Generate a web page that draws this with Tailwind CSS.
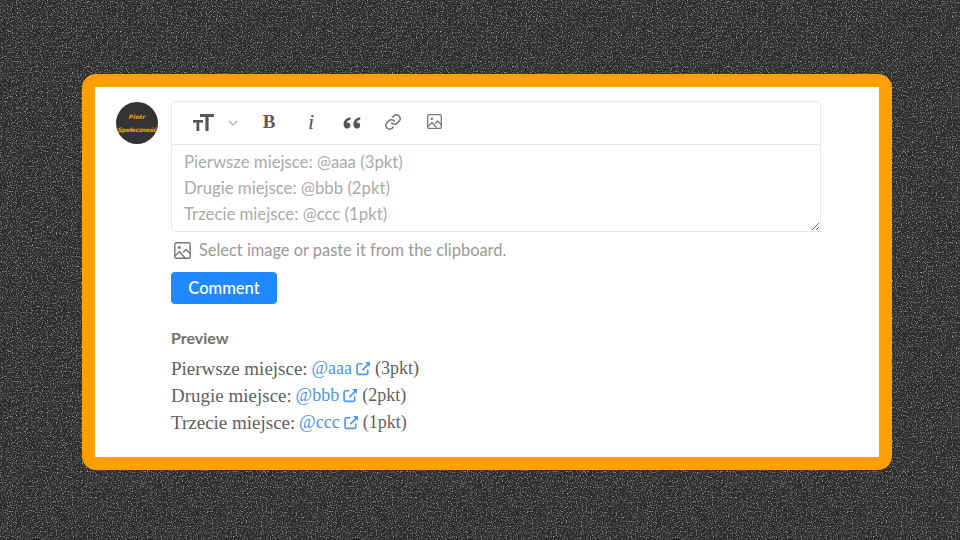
<!DOCTYPE html>
<html lang="en">
<head>
  <meta charset="UTF-8" />
  <title>Comment preview</title>
  <script src="https://cdn.jsdelivr.net/npm/@tailwindcss/browser@4"></script>
</head>
<body class="relative w-[960px] h-[540px] overflow-hidden bg-[#303030] font-['Lato','Noto_Sans',sans-serif]">
  <!-- grainy backdrop -->
  <svg class="absolute inset-0" width="960" height="540" aria-hidden="true">
    <filter id="specks" x="0" y="0" width="100%" height="100%">
      <feTurbulence type="fractalNoise" baseFrequency="0.8" numOctaves="2" seed="21" />
      <feColorMatrix type="matrix" values="0 0 0 0 0.42  0 0 0 0 0.42  0 0 0 0 0.42  0 2.600 0 0 -1.300" />
      <feGaussianBlur stdDeviation="0.35" />
    </filter>
    <rect width="960" height="540" fill="#2c2c2c" />
    <rect width="960" height="540" filter="url(#specks)" />
  </svg>

  <div class="relative pl-[82px] pt-[74px]">
    <main class="w-[810px] h-[396px] bg-white border-[13px] border-[#ffa000] rounded-[14px] pl-[21px] pt-[14px] flex gap-[13px]">
      <!-- avatar -->
      <div class="w-[42px] h-[42px] mt-[1px] rounded-full bg-[#333333] flex flex-col items-center justify-center shrink-0 text-[#f0a010] font-['DejaVu_Sans',sans-serif] leading-[13px] italic font-bold">
        <span class="text-[6px]">Piotr</span>
        <span class="text-[6px] tracking-[-0.3px]">Społeczność</span>
      </div>

      <div class="w-[650px]">
        <!-- editor -->
        <div class="w-[650px] h-[131px] border border-[#e8e8e8] rounded-[4px] flex flex-col">
          <div class="h-[43px] border-b border-[#e8e8e8] flex items-center shrink-0 text-[#555555]">
            <svg class="ml-[21px] -mt-[1px]" width="21" height="18" viewBox="0 0 21 18" fill="#555555">
              <rect x="7" y="0" width="14" height="3" /><rect x="12.400" y="0" width="3.200" height="17" />
              <rect x="0" y="6" width="10" height="2.600" /><rect x="3.500" y="6" width="2.800" height="11" />
            </svg>
            <svg class="ml-[14px]" width="10" height="6" viewBox="0 0 10 6" fill="none" stroke="#aaaaaa" stroke-width="1.200"><path d="M1 1l4 4 4-4" /></svg>
            <span class="ml-[24px] w-[14px] text-center text-[19px] font-bold font-['Liberation_Serif',serif] text-[#5a5a5a] -mt-[1px]">B</span>
            <span class="ml-[29px] w-[12px] text-center text-[22px] italic font-['Liberation_Serif',serif] text-[#555555] -mt-[4px]">i</span>
            <svg class="ml-[26px] -mt-[1px]" width="18" height="13" viewBox="0 0 18 13" fill="#555555">
              <path d="M7.500 1.200C3.600 1.800 1 4 .6 7.600c-.3 2.900 1.200 5 3.500 5 1.900 0 3.300-1.400 3.300-3.100 0-1.700-1.200-3-2.900-3-.4 0-.7 0-.9.100.5-1.500 1.900-2.700 3.900-3.100z" />
              <path d="M17.300 1.200C13.400 1.800 10.800 4 10.400 7.600c-.3 2.900 1.200 5 3.500 5 1.900 0 3.300-1.400 3.300-3.100 0-1.700-1.200-3-2.900-3-.4 0-.7 0-.9.100.5-1.500 1.900-2.700 3.900-3.100z" />
            </svg>
            <svg class="ml-[23px] -mt-[3px]" width="18" height="18" viewBox="0 0 24 24" fill="none" stroke="#777777" stroke-width="2" stroke-linecap="round" stroke-linejoin="round">
              <path d="M10 13a5 5 0 0 0 7.500.5l3-3a5 5 0 0 0-7-7l-1.700 1.700" />
              <path d="M14 11a5 5 0 0 0-7.500-.5l-3 3a5 5 0 0 0 7 7l1.700-1.700" />
            </svg>
            <svg class="ml-[25px] -mt-[3px]" width="15" height="15" viewBox="0 0 15 15" fill="none" stroke="#777777" stroke-width="1.300">
              <rect x=".7" y=".7" width="13.600" height="13.600" rx="1.200" />
              <circle cx="4.800" cy="4.800" r="1.300" fill="#777777" stroke="none" />
              <path d="M1 12.500l4-4 4.500 5M8 9.500l2.500-2.500 4 4" />
            </svg>
          </div>
          <textarea rows="3" class="flex-1 w-full px-[12px] pt-[4px] pb-0 text-[16.750px] leading-[26px] outline-none placeholder-[#aaaaaa] rounded-b-[4px]" placeholder="Pierwsze miejsce: @aaa (3pkt)
Drugie miejsce: @bbb (2pkt)
Trzecie miejsce: @ccc (1pkt)"></textarea>
        </div>

        <div class="h-[24px] mt-[6px] flex items-center gap-[8px] text-[#999999] text-[16.400px]">
          <svg class="ml-[3px]" width="17" height="17" viewBox="0 0 17 17" fill="none" stroke="#777777" stroke-width="1.400">
            <rect x=".8" y=".8" width="15.400" height="15.400" rx="1.500" />
            <circle cx="5.400" cy="5.400" r="1.500" fill="#777777" stroke="none" />
            <path d="M1 14l4.500-4.500 5.500 6.500M9 10.500l3-3 4.500 4.500" />
          </svg>
          <span>Select image or paste it from the clipboard.</span>
        </div>

        <button class="block mt-[10px] w-[106px] h-[32px] rounded-[4px] bg-[#2189ff] text-white text-[16.500px] font-medium">Comment</button>

        <h2 class="mt-[24px] text-[16px] leading-[20px] font-bold text-[#707070]">Preview</h2>
        <div class="mt-[7px] font-['Liberation_Serif',serif] text-[19px] leading-[27px] text-[#5f5f5f]">
          <p class="flex items-center">Pierwsze miejsce:&nbsp;<a class="text-[#4a96f0] text-[18px] -ml-[1px]">@aaa</a>
            <svg class="mx-[4px]" width="15" height="15" viewBox="0 0 14 14" fill="none" stroke="#4a96f0" stroke-width="1.500"><path d="M6 2.500H2.500a1.500 1.500 0 0 0-1.500 1.500v7a1.500 1.500 0 0 0 1.500 1.500h7a1.500 1.500 0 0 0 1.500-1.500V8" /><path d="M6 8.500L12 2.500" /><path d="M8.500 1h4.500v4.500z" fill="#4a96f0" stroke="none" /></svg><span class="text-[18px]">(3pkt)</span></p>
          <p class="flex items-center">Drugie miejsce:&nbsp;<a class="text-[#4a96f0] text-[18px] -ml-[1px]">@bbb</a>
            <svg class="mx-[4px]" width="15" height="15" viewBox="0 0 14 14" fill="none" stroke="#4a96f0" stroke-width="1.500"><path d="M6 2.500H2.500a1.500 1.500 0 0 0-1.500 1.500v7a1.500 1.500 0 0 0 1.500 1.500h7a1.500 1.500 0 0 0 1.500-1.500V8" /><path d="M6 8.500L12 2.500" /><path d="M8.500 1h4.500v4.500z" fill="#4a96f0" stroke="none" /></svg><span class="text-[18px]">(2pkt)</span></p>
          <p class="flex items-center">Trzecie miejsce:&nbsp;<a class="text-[#4a96f0] text-[18px] -ml-[1px]">@ccc</a>
            <svg class="mx-[4px]" width="15" height="15" viewBox="0 0 14 14" fill="none" stroke="#4a96f0" stroke-width="1.500"><path d="M6 2.500H2.500a1.500 1.500 0 0 0-1.500 1.500v7a1.500 1.500 0 0 0 1.500 1.500h7a1.500 1.500 0 0 0 1.500-1.500V8" /><path d="M6 8.500L12 2.500" /><path d="M8.500 1h4.500v4.500z" fill="#4a96f0" stroke="none" /></svg><span class="text-[18px]">(1pkt)</span></p>
        </div>
      </div>
    </main>
  </div>
</body>
</html>
